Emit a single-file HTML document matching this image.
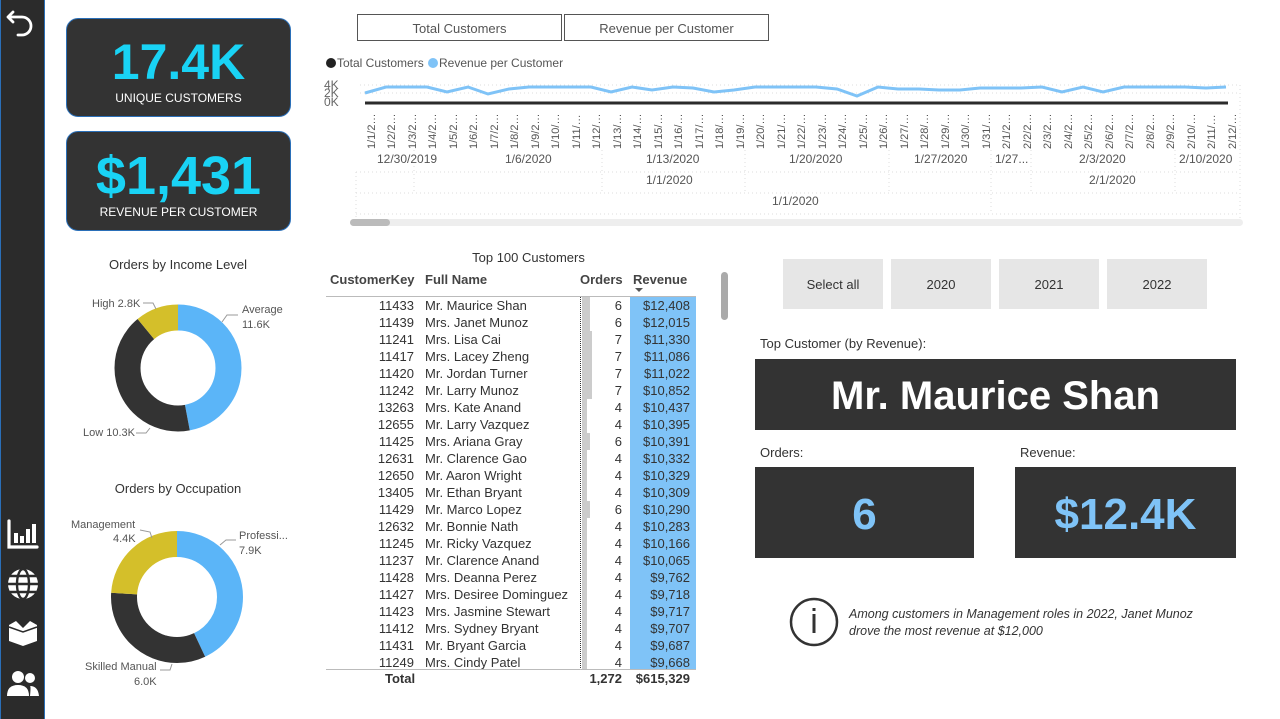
<!DOCTYPE html>
<html><head><meta charset="utf-8"><style>
*{margin:0;padding:0;box-sizing:border-box}
body{width:1280px;height:719px;background:#fff;font-family:"Segoe UI","Liberation Sans",sans-serif;position:relative;overflow:hidden;color:#333}
.abs{position:absolute}
.kpi{position:absolute;left:66px;width:225px;background:#333;border:1.5px solid #2a6fb8;border-radius:12px;color:#fff;text-align:center}
.kpi .v{color:#19d3f5;font-weight:bold;font-size:50px;line-height:1}
.kpi .l{font-size:12px}
.row{position:absolute;left:0;height:17px;width:370px;line-height:17px}
.row span{position:absolute;top:0}
.btn{position:absolute;top:259px;width:100px;height:50px;background:#e6e6e6;font-size:13px;text-align:center;line-height:52px;color:#333}
.dark{position:absolute;background:#333;text-align:center}
</style></head><body>
<div class="abs" style="left:0;top:0;width:45px;height:719px;background:#2b2b2b;border-left:1.5px solid #2a6fb8;border-right:1.5px solid #2a6fb8"></div>
<svg class="abs" style="left:0;top:0" width="45" height="719">
<path d="M13 12 L8 17 L13 22 M8 17 H22 A9 9 0 0 1 22 35 H18" fill="none" stroke="#fff" stroke-width="2.8" stroke-linecap="round" stroke-linejoin="round"/>
<path d="M9 521 V547 H37" fill="none" stroke="#fff" stroke-width="3.2" stroke-linecap="round"/>
<rect x="14" y="533" width="4" height="10" fill="#fff"/><rect x="20" y="536" width="4" height="7" fill="#fff"/><rect x="26" y="529" width="4" height="14" fill="#fff"/><rect x="32" y="524" width="4" height="19" fill="#fff"/>
<circle cx="23" cy="584" r="15" fill="#fff"/>
<g stroke="#2b2b2b" stroke-width="2.4" fill="none"><ellipse cx="23" cy="584" rx="6" ry="15"/><line x1="8" y1="584" x2="38" y2="584"/><path d="M10 576 H36 M10 592 H36"/></g>
<path d="M9 625 L16 621 L23 628 L30 621 L37 625 L37 641 L23 646 L9 641 Z" fill="#fff"/><path d="M9 627 L23 632 L37 627" fill="none" stroke="#2b2b2b" stroke-width="1.5"/>
<circle cx="18" cy="677" r="6" fill="#fff"/><circle cx="30" cy="678" r="5" fill="#fff"/>
<path d="M7 696 Q7 685 18 685 Q29 685 29 696 Z" fill="#fff"/><path d="M30 696 Q31 686 30 686 Q38 686 39 696 Z" fill="#fff"/>
</svg>
<div class="kpi" style="top:18px;height:99px"><div class="v" style="margin-top:18px">17.4K</div><div class="l" style="margin-top:4px">UNIQUE CUSTOMERS</div></div>
<div class="kpi" style="top:131px;height:100px"><div class="v" style="margin-top:17px;font-size:54px">$1,431</div><div class="l" style="margin-top:2px">REVENUE PER CUSTOMER</div></div>
<div class="abs" style="left:60px;top:257px;width:236px;text-align:center;font-size:13px">Orders by Income Level</div>
<svg class="abs" style="left:60px;top:280px" width="240" height="170" font-size="11" fill="#555">
<g transform="translate(118,88) rotate(-90)" fill="none" stroke-width="26">
<circle r="50.5" stroke="#5bb5f8" stroke-dasharray="149 400"/>
<circle r="50.5" stroke="#333" stroke-dasharray="0 149 133 400"/>
<circle r="50.5" stroke="#d4bf2a" stroke-dasharray="0 282 36 400"/>
</g>
<text x="182" y="33">Average</text><text x="182" y="48">11.6K</text>
<path d="M162 42 L167 35 L178 35" stroke="#999" fill="none"/>
<text x="32" y="27">High 2.8K</text><path d="M83 23 L93 23 L96 29" stroke="#999" fill="none"/>
<text x="23" y="156">Low 10.3K</text><path d="M76 153 L86 153 L90 148" stroke="#999" fill="none"/>
</svg>
<div class="abs" style="left:60px;top:481px;width:236px;text-align:center;font-size:13px">Orders by Occupation</div>
<svg class="abs" style="left:60px;top:510px" width="240" height="180" font-size="11" fill="#555">
<g transform="translate(117,87) rotate(-90)" fill="none" stroke-width="26">
<circle r="53" stroke="#5bb5f8" stroke-dasharray="143 400"/>
<circle r="53" stroke="#333" stroke-dasharray="0 143 110 400"/>
<circle r="53" stroke="#d4bf2a" stroke-dasharray="0 253 80 400"/>
</g>
<text x="179" y="29">Professi...</text><text x="179" y="44">7.9K</text>
<path d="M160 35 L166 30 L176 30" stroke="#999" fill="none"/>
<text x="11" y="18">Management</text><text x="53" y="32">4.4K</text><path d="M80 20 L90 22 L92 28" stroke="#999" fill="none"/>
<text x="25" y="160">Skilled Manual</text><text x="74" y="175">6.0K</text><path d="M100 160 L110 160 L112 154" stroke="#999" fill="none"/>
</svg>
<div class="abs" style="left:357px;top:14px;width:205px;height:27px;border:1px solid #555;font-size:13px;text-align:center;line-height:27px;color:#555">Total Customers</div>
<div class="abs" style="left:564px;top:14px;width:205px;height:27px;border:1px solid #555;font-size:13px;text-align:center;line-height:27px;color:#555">Revenue per Customer</div>
<svg class="abs" style="left:320px;top:50px" width="940" height="180" font-family="Segoe UI,Liberation Sans,sans-serif">
<circle cx="11" cy="13" r="5" fill="#222"/><text x="17" y="17" font-size="12" fill="#555">Total Customers</text>
<circle cx="113" cy="13" r="5" fill="#7fc3f7"/><text x="119" y="17" font-size="12" fill="#555">Revenue per Customer</text>
<text x="4" y="39" font-size="12" fill="#666">4K</text><text x="4" y="47" font-size="12" fill="#666">2K</text><text x="4" y="56" font-size="12" fill="#666">0K</text>
<g stroke="#ddd" stroke-dasharray="1 3"><line x1="40" y1="35" x2="920" y2="35"/><line x1="40" y1="43" x2="920" y2="43"/><line x1="36" y1="122" x2="920" y2="122"/><line x1="36" y1="143" x2="920" y2="143"/><line x1="36" y1="164" x2="920" y2="164"/><line x1="36" y1="122" x2="36" y2="170"/><line x1="920" y1="35" x2="920" y2="170"/><line x1="94" y1="100" x2="94" y2="143"/><line x1="282" y1="100" x2="282" y2="143"/><line x1="425" y1="100" x2="425" y2="143"/><line x1="569" y1="100" x2="569" y2="143"/><line x1="671" y1="100" x2="671" y2="164"/><line x1="711" y1="100" x2="711" y2="143"/><line x1="855" y1="100" x2="855" y2="143"/></g>
<polyline fill="none" stroke="#7fc3f7" stroke-width="3" points="45,43 66,37 86,37 107,37 127,42 148,37 168,44 189,39 209,37 230,37 250,37 271,37 291,42 312,37 332,40 353,37 373,38 394,42 414,40 435,37 455,37 476,37 496,37 517,39 537,46 558,37 578,39 599,39 619,40 640,40 660,38 681,38 701,38 722,37 742,42 763,37 783,42 804,37 824,37 845,37 865,37 886,38 906,37"/>
<line x1="45" y1="53" x2="908" y2="53" stroke="#2b2b2b" stroke-width="3"/>
<g font-size="12" fill="#555">
<text x="57" y="113">12/30/2019</text><text x="185" y="113">1/6/2020</text><text x="326" y="113">1/13/2020</text><text x="469" y="113">1/20/2020</text><text x="594" y="113">1/27/2020</text><text x="675" y="113">1/27...</text><text x="759" y="113">2/3/2020</text><text x="859" y="113">2/10/2020</text>
<text x="326" y="134">1/1/2020</text><text x="769" y="134">2/1/2020</text><text x="452" y="155">1/1/2020</text>
</g>
<rect x="30" y="169" width="893" height="7" rx="3.5" fill="#eee"/><rect x="30" y="169" width="40" height="7" rx="3.5" fill="#bbb"/>
</svg>
<svg class="abs" style="left:320px;top:50px" width="940" height="110" font-family="Segoe UI,Liberation Sans,sans-serif" font-size="11" fill="#555">
<text transform="translate(55,99) rotate(-90)">1/1/2…</text><text transform="translate(75,99) rotate(-90)">1/2/2…</text><text transform="translate(96,99) rotate(-90)">1/3/2…</text><text transform="translate(116,99) rotate(-90)">1/4/2…</text><text transform="translate(137,99) rotate(-90)">1/5/2…</text><text transform="translate(157,99) rotate(-90)">1/6/2…</text><text transform="translate(178,99) rotate(-90)">1/7/2…</text><text transform="translate(198,99) rotate(-90)">1/8/2…</text><text transform="translate(219,99) rotate(-90)">1/9/2…</text><text transform="translate(239,99) rotate(-90)">1/10/…</text><text transform="translate(260,99) rotate(-90)">1/11/…</text><text transform="translate(280,99) rotate(-90)">1/12/…</text><text transform="translate(301,99) rotate(-90)">1/13/…</text><text transform="translate(321,99) rotate(-90)">1/14/…</text><text transform="translate(342,99) rotate(-90)">1/15/…</text><text transform="translate(362,99) rotate(-90)">1/16/…</text><text transform="translate(383,99) rotate(-90)">1/17/…</text><text transform="translate(403,99) rotate(-90)">1/18/…</text><text transform="translate(424,99) rotate(-90)">1/19/…</text><text transform="translate(444,99) rotate(-90)">1/20/…</text><text transform="translate(465,99) rotate(-90)">1/21/…</text><text transform="translate(485,99) rotate(-90)">1/22/…</text><text transform="translate(506,99) rotate(-90)">1/23/…</text><text transform="translate(526,99) rotate(-90)">1/24/…</text><text transform="translate(547,99) rotate(-90)">1/25/…</text><text transform="translate(567,99) rotate(-90)">1/26/…</text><text transform="translate(588,99) rotate(-90)">1/27/…</text><text transform="translate(608,99) rotate(-90)">1/28/…</text><text transform="translate(629,99) rotate(-90)">1/29/…</text><text transform="translate(649,99) rotate(-90)">1/30/…</text><text transform="translate(670,99) rotate(-90)">1/31/…</text><text transform="translate(690,99) rotate(-90)">2/1/2…</text><text transform="translate(711,99) rotate(-90)">2/2/2…</text><text transform="translate(731,99) rotate(-90)">2/3/2…</text><text transform="translate(752,99) rotate(-90)">2/4/2…</text><text transform="translate(772,99) rotate(-90)">2/5/2…</text><text transform="translate(793,99) rotate(-90)">2/6/2…</text><text transform="translate(813,99) rotate(-90)">2/7/2…</text><text transform="translate(834,99) rotate(-90)">2/8/2…</text><text transform="translate(854,99) rotate(-90)">2/9/2…</text><text transform="translate(875,99) rotate(-90)">2/10/…</text><text transform="translate(895,99) rotate(-90)">2/11/…</text><text transform="translate(916,99) rotate(-90)">2/12/…</text>
</svg>
<div class="abs" style="left:326px;top:250px;width:405px;text-align:center;font-size:13px">Top 100 Customers</div>
<div class="abs" style="left:330px;top:272px;font-size:13px;font-weight:bold;color:#444">CustomerKey</div>
<div class="abs" style="left:425px;top:272px;font-size:13px;font-weight:bold;color:#444">Full Name</div>
<div class="abs" style="left:580px;top:272px;font-size:13px;font-weight:bold;color:#444">Orders</div>
<div class="abs" style="left:633px;top:272px;font-size:13px;font-weight:bold;color:#444">Revenue</div>
<div class="abs" style="left:635px;top:288px;width:0;height:0;border-left:4px solid transparent;border-right:4px solid transparent;border-top:4px solid #555"></div>
<div class="abs" style="left:326px;top:296px;width:370px;height:1px;background:#bbb"></div>
<div class="abs" style="left:630px;top:297px;width:66px;height:373px;background:#7fc3f7"></div>
<div class="abs" style="left:580px;top:297px;width:0;height:373px;border-left:1px dotted #333"></div>
<div class="abs" style="left:326px;top:669px;width:370px;height:1px;background:#bbb"></div>
<div class="abs" style="left:326px;top:297px;width:370px;font-size:13px;color:#333">
<div class="row" style="top:0"><span style="right:282px">11433</span><span style="left:99px">Mr. Maurice Shan</span><i class="abs" style="left:256px;top:0;width:8px;height:17px;background:#ccc"></i><span style="right:74px">6</span><span style="right:6px">$12,408</span></div>
<div class="row" style="top:17px"><span style="right:282px">11439</span><span style="left:99px">Mrs. Janet Munoz</span><i class="abs" style="left:256px;top:0;width:8px;height:17px;background:#ccc"></i><span style="right:74px">6</span><span style="right:6px">$12,015</span></div>
<div class="row" style="top:34px"><span style="right:282px">11241</span><span style="left:99px">Mrs. Lisa Cai</span><i class="abs" style="left:256px;top:0;width:10px;height:17px;background:#ccc"></i><span style="right:74px">7</span><span style="right:6px">$11,330</span></div>
<div class="row" style="top:51px"><span style="right:282px">11417</span><span style="left:99px">Mrs. Lacey Zheng</span><i class="abs" style="left:256px;top:0;width:10px;height:17px;background:#ccc"></i><span style="right:74px">7</span><span style="right:6px">$11,086</span></div>
<div class="row" style="top:68px"><span style="right:282px">11420</span><span style="left:99px">Mr. Jordan Turner</span><i class="abs" style="left:256px;top:0;width:10px;height:17px;background:#ccc"></i><span style="right:74px">7</span><span style="right:6px">$11,022</span></div>
<div class="row" style="top:85px"><span style="right:282px">11242</span><span style="left:99px">Mr. Larry Munoz</span><i class="abs" style="left:256px;top:0;width:10px;height:17px;background:#ccc"></i><span style="right:74px">7</span><span style="right:6px">$10,852</span></div>
<div class="row" style="top:102px"><span style="right:282px">13263</span><span style="left:99px">Mrs. Kate Anand</span><i class="abs" style="left:256px;top:0;width:5px;height:17px;background:#ccc"></i><span style="right:74px">4</span><span style="right:6px">$10,437</span></div>
<div class="row" style="top:119px"><span style="right:282px">12655</span><span style="left:99px">Mr. Larry Vazquez</span><i class="abs" style="left:256px;top:0;width:5px;height:17px;background:#ccc"></i><span style="right:74px">4</span><span style="right:6px">$10,395</span></div>
<div class="row" style="top:136px"><span style="right:282px">11425</span><span style="left:99px">Mrs. Ariana Gray</span><i class="abs" style="left:256px;top:0;width:8px;height:17px;background:#ccc"></i><span style="right:74px">6</span><span style="right:6px">$10,391</span></div>
<div class="row" style="top:153px"><span style="right:282px">12631</span><span style="left:99px">Mr. Clarence Gao</span><i class="abs" style="left:256px;top:0;width:5px;height:17px;background:#ccc"></i><span style="right:74px">4</span><span style="right:6px">$10,332</span></div>
<div class="row" style="top:170px"><span style="right:282px">12650</span><span style="left:99px">Mr. Aaron Wright</span><i class="abs" style="left:256px;top:0;width:5px;height:17px;background:#ccc"></i><span style="right:74px">4</span><span style="right:6px">$10,329</span></div>
<div class="row" style="top:187px"><span style="right:282px">13405</span><span style="left:99px">Mr. Ethan Bryant</span><i class="abs" style="left:256px;top:0;width:5px;height:17px;background:#ccc"></i><span style="right:74px">4</span><span style="right:6px">$10,309</span></div>
<div class="row" style="top:204px"><span style="right:282px">11429</span><span style="left:99px">Mr. Marco Lopez</span><i class="abs" style="left:256px;top:0;width:8px;height:17px;background:#ccc"></i><span style="right:74px">6</span><span style="right:6px">$10,290</span></div>
<div class="row" style="top:221px"><span style="right:282px">12632</span><span style="left:99px">Mr. Bonnie Nath</span><i class="abs" style="left:256px;top:0;width:5px;height:17px;background:#ccc"></i><span style="right:74px">4</span><span style="right:6px">$10,283</span></div>
<div class="row" style="top:238px"><span style="right:282px">11245</span><span style="left:99px">Mr. Ricky Vazquez</span><i class="abs" style="left:256px;top:0;width:5px;height:17px;background:#ccc"></i><span style="right:74px">4</span><span style="right:6px">$10,166</span></div>
<div class="row" style="top:255px"><span style="right:282px">11237</span><span style="left:99px">Mr. Clarence Anand</span><i class="abs" style="left:256px;top:0;width:5px;height:17px;background:#ccc"></i><span style="right:74px">4</span><span style="right:6px">$10,065</span></div>
<div class="row" style="top:272px"><span style="right:282px">11428</span><span style="left:99px">Mrs. Deanna Perez</span><i class="abs" style="left:256px;top:0;width:5px;height:17px;background:#ccc"></i><span style="right:74px">4</span><span style="right:6px">$9,762</span></div>
<div class="row" style="top:289px"><span style="right:282px">11427</span><span style="left:99px">Mrs. Desiree Dominguez</span><i class="abs" style="left:256px;top:0;width:5px;height:17px;background:#ccc"></i><span style="right:74px">4</span><span style="right:6px">$9,718</span></div>
<div class="row" style="top:306px"><span style="right:282px">11423</span><span style="left:99px">Mrs. Jasmine Stewart</span><i class="abs" style="left:256px;top:0;width:5px;height:17px;background:#ccc"></i><span style="right:74px">4</span><span style="right:6px">$9,717</span></div>
<div class="row" style="top:323px"><span style="right:282px">11412</span><span style="left:99px">Mrs. Sydney Bryant</span><i class="abs" style="left:256px;top:0;width:5px;height:17px;background:#ccc"></i><span style="right:74px">4</span><span style="right:6px">$9,707</span></div>
<div class="row" style="top:340px"><span style="right:282px">11431</span><span style="left:99px">Mr. Bryant Garcia</span><i class="abs" style="left:256px;top:0;width:5px;height:17px;background:#ccc"></i><span style="right:74px">4</span><span style="right:6px">$9,687</span></div>
<div class="row" style="top:357px;height:15px;overflow:hidden"><span style="right:282px">11249</span><span style="left:99px">Mrs. Cindy Patel</span><i class="abs" style="left:256px;top:0;width:5px;height:17px;background:#ccc"></i><span style="right:74px">4</span><span style="right:6px">$9,668</span></div>
</div>
<div class="abs" style="left:385px;top:671px;font-size:13px;font-weight:bold;color:#333">Total</div>
<div class="abs" style="left:580px;top:671px;width:42px;text-align:right;font-size:13px;font-weight:bold;color:#333">1,272</div>
<div class="abs" style="left:626px;top:671px;width:64px;text-align:right;font-size:13px;font-weight:bold;color:#333">$615,329</div>
<div class="abs" style="left:721px;top:272px;width:7px;height:48px;border-radius:4px;background:#aaa"></div>
<div class="btn" style="left:783px">Select all</div>
<div class="btn" style="left:891px">2020</div>
<div class="btn" style="left:999px">2021</div>
<div class="btn" style="left:1107px">2022</div>
<div class="abs" style="left:760px;top:336px;font-size:13px">Top Customer (by Revenue):</div>
<div class="dark" style="left:755px;top:359px;width:481px;height:71px;color:#fff;font-weight:bold;font-size:40px;line-height:74px">Mr. Maurice Shan</div>
<div class="abs" style="left:760px;top:445px;font-size:13px">Orders:</div>
<div class="abs" style="left:1020px;top:445px;font-size:13px">Revenue:</div>
<div class="dark" style="left:755px;top:467px;width:219px;height:91px;color:#7fc3f7;font-weight:bold;font-size:44px;line-height:96px">6</div>
<div class="dark" style="left:1015px;top:467px;width:221px;height:91px;color:#7fc3f7;font-weight:bold;font-size:44px;line-height:96px">$12.4K</div>
<svg class="abs" style="left:789px;top:597px" width="50" height="50"><circle cx="25" cy="25" r="23" fill="none" stroke="#333" stroke-width="2.5"/><rect x="23.5" y="17" width="3" height="19" fill="#333"/><rect x="23.5" y="11" width="3" height="3" fill="#333"/></svg>
<div class="abs" style="left:849px;top:606px;font-size:12.5px;font-style:italic;line-height:17px;color:#333">Among customers in Management roles in 2022, Janet Munoz<br>drove the most revenue at $12,000</div>
</body></html>
